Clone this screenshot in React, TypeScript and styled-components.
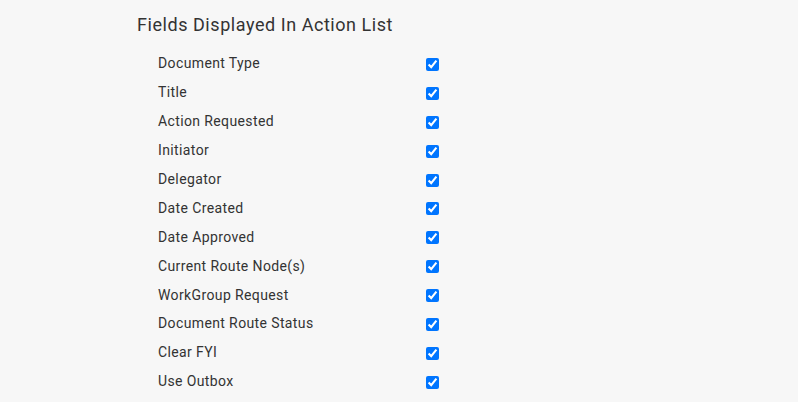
import React from "react";
import styled, { createGlobalStyle } from "styled-components";

const Global = createGlobalStyle`
  html, body { margin: 0; padding: 0; background: #f7f7f7; }
  body { font-family: Roboto, "Liberation Sans", sans-serif; color: #333; }
`;

const Page = styled.div`
  padding: 13px 0 0 137px;
`;

const Heading = styled.h2`
  margin: 0 0 12px;
  font-size: 18px;
  font-weight: 400;
  line-height: 24px;
  letter-spacing: 0.55px;
  color: #333;
`;

const List = styled.div`
  display: flex;
  flex-direction: column;
  padding-left: 21px;
`;

const Row = styled.label`
  display: grid;
  grid-template-columns: 268px 13px;
  align-items: center;
  height: 28.9px;
  font-size: 14px;
  letter-spacing: 0.38px;
  color: #333;
`;

const Check = styled.input`
  width: 13px;
  height: 13px;
  margin: 2px 0 0 0;
`;

const fields = [
  "Document Type",
  "Title",
  "Action Requested",
  "Initiator",
  "Delegator",
  "Date Created",
  "Date Approved",
  "Current Route Node(s)",
  "WorkGroup Request",
  "Document Route Status",
  "Clear FYI",
  "Use Outbox",
];

export default function App() {
  return (
    <>
      <Global />
      <Page>
        <Heading>Fields Displayed In Action List</Heading>
        <List>
          {fields.map((f) => (
            <Row key={f}>
              <span>{f}</span>
              <Check type="checkbox" defaultChecked />
            </Row>
          ))}
        </List>
      </Page>
    </>
  );
}
